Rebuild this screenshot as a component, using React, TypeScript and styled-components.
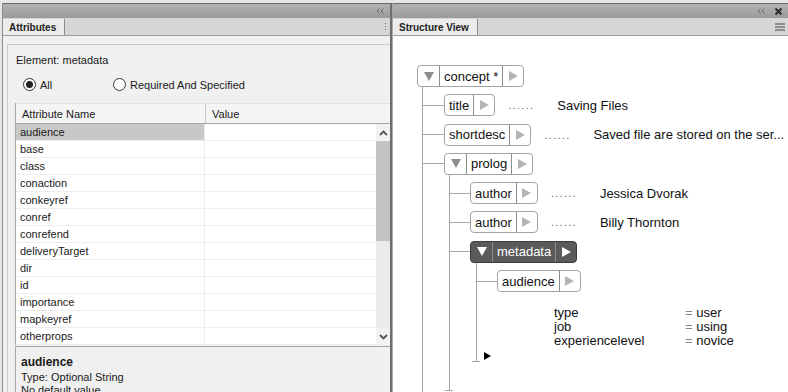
import React from 'react'
import styled, { createGlobalStyle } from 'styled-components'

const GlobalStyle = createGlobalStyle`
  html, body {
    margin: 0;
    padding: 0;
  }
  body {
    width: 788px;
    height: 392px;
    overflow: hidden;
    background: #e6e6e6;
    font-family: 'Liberation Sans', Arial, sans-serif;
  }
`

const attributes = [
  'audience', 'base', 'class', 'conaction', 'conkeyref', 'conref', 'conrefend',
  'deliveryTarget', 'dir', 'id', 'importance', 'mapkeyref', 'otherprops',
]

const Frame = styled.div`
  display: flex;
  width: 788px;
  height: 392px;
  padding-top: 3px;
  box-sizing: border-box;
  overflow: hidden;
`

const LeftPanel = styled.div`
  display: flex;
  flex-direction: column;
  width: 390px;
  margin-left: 2px;
  box-sizing: border-box;
  border-left: 1px solid #8c8c8c;
  border-right: 2px solid #6e6e6e;
  flex: none;
`

const RightPanel = styled.div`
  display: flex;
  flex-direction: column;
  flex: 1;
  border-left: 1px solid #a8a8a8;
`

const TitleBar = styled.div`
  display: flex;
  align-items: center;
  justify-content: flex-end;
  gap: 10px;
  height: 14px;
  padding-right: 6px;
  border-top: 1px solid #6a6a6a;
  background: linear-gradient(#b2b2b2, #9a9a9a);
  flex: none;
`

const TabStrip = styled.div`
  display: flex;
  align-items: stretch;
  justify-content: space-between;
  height: 17px;
  background: #d6d6d6;
  border-bottom: 1px solid #9c9c9c;
  flex: none;
`

const Tab = styled.div`
  display: flex;
  align-items: center;
  padding: 0 8px 0 6px;
  margin-top: 1px;
  background: #ececec;
  border-right: 1px solid #8a8a8a;
  font-size: 10px;
  font-weight: bold;
  color: #222;
`

const StripTools = styled.div`
  display: flex;
  align-items: center;
  padding-right: 3px;
`

const LeftBody = styled.div`
  flex: 1;
  display: flex;
  flex-direction: column;
  background: #f0f0f0;
  padding: 8px 0 0 4px;
  min-height: 0;
`

const GroupBox = styled.div`
  flex: 1;
  display: flex;
  flex-direction: column;
  border-top: 1px solid #c8c8c8;
  border-left: 1px solid #c8c8c8;
  padding: 8px 0 0 8px;
  font-size: 11px;
  color: #1a1a1a;
  min-height: 0;
`

const ElementLine = styled.div`
  line-height: 14px;
`

const RadioRow = styled.div`
  display: flex;
  align-items: center;
  margin-top: 11px;
  padding-left: 7px;
  height: 14px;
`

const RadioOption = styled.label<{ $width?: number }>`
  display: flex;
  align-items: center;
  gap: 4px;
  width: ${p => (p.$width ? `${p.$width}px` : 'auto')};
`

const Radio = styled.span<{ $on?: boolean }>`
  display: flex;
  align-items: center;
  justify-content: center;
  width: 13px;
  height: 13px;
  box-sizing: border-box;
  border-radius: 50%;
  border: 1px solid #333;
  background: #fff;
  &::after {
    content: '';
    width: 7px;
    height: 7px;
    border-radius: 50%;
    background: ${p => (p.$on ? '#222' : 'transparent')};
  }
`

const Table = styled.div`
  display: flex;
  flex-direction: column;
  margin: 12px 0 0 -1px;
  border-left: 1px solid #a8a8a8;
  background: #fff;
`

const HeaderRow = styled.div`
  display: flex;
  height: 19px;
  border-top: 1px solid #e0e0e0;
  border-bottom: 1px solid #a6a6a6;
  background: #f4f4f4;
`

const HeaderCell = styled.div<{ $width?: number }>`
  display: flex;
  align-items: center;
  padding-left: 6px;
  width: ${p => (p.$width ? `${p.$width}px` : 'auto')};
  flex: ${p => (p.$width ? 'none' : '1')};
  box-sizing: border-box;
  border-right: ${p => (p.$width ? '1px solid #c8c8c8' : 'none')};
`

const TableBody = styled.div`
  display: flex;
`

const Rows = styled.div`
  flex: 1;
  display: flex;
  flex-direction: column;
`

const Row = styled.div`
  display: flex;
  height: 17px;
  box-sizing: border-box;
  border-bottom: 1px solid #ededed;
`

const NameCell = styled.div<{ $selected?: boolean }>`
  display: flex;
  align-items: center;
  width: 189px;
  padding-left: 4px;
  box-sizing: border-box;
  border-right: 1px solid #ededed;
  background: ${p => (p.$selected ? '#c8c8c8' : 'transparent')};
`

const ValueCell = styled.div`
  flex: 1;
`

const Scrollbar = styled.div`
  display: flex;
  flex-direction: column;
  width: 14px;
  background: #ebebeb;
  flex: none;
`

const ScrollButton = styled.div`
  display: flex;
  align-items: center;
  justify-content: center;
  height: 17px;
  background: #f2f2f2;
`

const Thumb = styled.div`
  height: 100px;
  background: #c3c3c3;
`

const Track = styled.div`
  flex: 1;
`

const Description = styled.div`
  flex: 1;
  margin: 1px 0 0 -1px;
  border: 1px solid #a8a8a8;
  border-right: none;
  border-bottom: none;
  background: #f0f0f0;
  padding: 9px 5px 0;
  line-height: 13px;
`

const DescTitle = styled.div`
  font-size: 12px;
  font-weight: bold;
  margin-bottom: 2px;
`

const TreeBody = styled.div`
  flex: 1;
  background: #fff;
  padding: 29px 0 0 24px;
  overflow: hidden;
  font-size: 13px;
  color: #111;
`

const TreeRow = styled.div<{ $first?: boolean }>`
  display: flex;
  align-items: center;
  height: 22px;
  margin-top: ${p => (p.$first ? '0' : '7.3px')};
  white-space: nowrap;
`

const Connector = styled.span<{ $w: number }>`
  width: ${p => p.$w}px;
  height: 1px;
  background: #a6a6a6;
  flex: none;
`

const Children = styled.div<{ $indent: number; $tail?: number }>`
  display: flex;
  flex-direction: column;
  align-items: flex-start;
  margin-left: ${p => p.$indent}px;
  border-left: 1px solid #a6a6a6;
  padding-bottom: ${p => p.$tail ?? 0}px;
`

const Tick = styled.span<{ $gap: number }>`
  display: block;
  width: 8px;
  height: 1px;
  margin: ${p => p.$gap}px 0 0 -5px;
  background: #a6a6a6;
`

const NodeBox = styled.div<{ $dark?: boolean }>`
  display: inline-flex;
  height: 22px;
  box-sizing: border-box;
  border: 1px solid ${p => (p.$dark ? '#3c3c3c' : '#a3a3a3')};
  border-radius: 4px;
  background: ${p => (p.$dark ? '#5a5a5a' : '#fff')};
  color: ${p => (p.$dark ? '#fff' : '#111')};
  flex: none;
`

const Seg = styled.span<{ $dark?: boolean; $w?: number }>`
  display: flex;
  align-items: center;
  justify-content: center;
  width: ${p => (p.$w ? `${p.$w}px` : 'auto')};
  padding: ${p => (p.$w ? '0' : '0 4px')};
  & + & {
    border-left: 1px solid ${p => (p.$dark ? '#8c8c8c' : '#c6c6c6')};
  }
`

const DownTri = styled.span<{ $dark?: boolean }>`
  display: block;
  width: 0;
  height: 0;
  border-left: 5px solid transparent;
  border-right: 5px solid transparent;
  border-top: 9px solid ${p => (p.$dark ? '#fff' : '#8e8e8e')};
`

const RightTri = styled.span<{ $dark?: boolean; $color?: string; $size?: number }>`
  display: block;
  width: 0;
  height: 0;
  border-top: ${p => (p.$size ?? 10) / 2}px solid transparent;
  border-bottom: ${p => (p.$size ?? 10) / 2}px solid transparent;
  border-left: ${p => ((p.$size ?? 10) * 0.9).toFixed(1)}px solid
    ${p => p.$color ?? (p.$dark ? '#fff' : '#b4b4b4')};
`

const Dots = styled.span`
  width: 62px;
  padding-left: 13px;
  box-sizing: border-box;
  letter-spacing: 1.3px;
  color: #666;
  font-size: 11px;
  flex: none;
`

const Value = styled.span`
  color: #111;
`

const AttrBlock = styled.div`
  display: grid;
  grid-template-columns: 131px auto;
  margin: 14px 0 0 77px;
  line-height: 14px;
`

const AttrEq = styled.span`
  color: #111;
  &::before {
    content: '= ';
    color: #888;
  }
`

const EndMarker = styled.span`
  display: flex;
  margin: 4px 0 0 7px;
`

const Chevrons = () => (
  <svg width="8" height="6" viewBox="0 0 8 6">
    <polyline points="3.5,0.5 1,3 3.5,5.5" fill="none" stroke="#666" strokeWidth="1" />
    <polyline points="7.5,0.5 5,3 7.5,5.5" fill="none" stroke="#666" strokeWidth="1" />
  </svg>
)

const CloseIcon = () => (
  <svg width="7" height="7" viewBox="0 0 7 7">
    <path d="M0.5 0.5 L6.5 6.5 M6.5 0.5 L0.5 6.5" stroke="#2a2a2a" strokeWidth="2" />
  </svg>
)

const MenuIcon = () => (
  <svg width="10" height="8" viewBox="0 0 10 8">
    <path d="M0 1 H10 M0 4 H10 M0 7 H10" stroke="#444" strokeWidth="1.2" />
  </svg>
)

const Grip = () => (
  <svg width="2" height="8" viewBox="0 0 2 8">
    <rect x="0" y="0" width="1" height="1" fill="#666" />
    <rect x="0" y="3" width="1" height="1" fill="#666" />
    <rect x="0" y="6" width="1" height="1" fill="#666" />
  </svg>
)

const Chevron = ({ up }: { up?: boolean }) => (
  <svg width="9" height="6" viewBox="0 0 9 6">
    <polyline
      points={up ? '1,5 4.5,1.5 8,5' : '1,1 4.5,4.5 8,1'}
      fill="none"
      stroke="#555"
      strokeWidth="1.8"
    />
  </svg>
)

interface NodeProps {
  label: string
  toggle?: boolean
  dark?: boolean
}

const Node = ({ label, toggle, dark }: NodeProps) => (
  <NodeBox $dark={dark}>
    {toggle && (
      <Seg $dark={dark} $w={21}>
        <DownTri $dark={dark} />
      </Seg>
    )}
    <Seg $dark={dark}>{label}</Seg>
    <Seg $dark={dark} $w={20}>
      <RightTri $dark={dark} />
    </Seg>
  </NodeBox>
)

const Leaf = ({ label, value, w }: { label: string; value?: string; w: number }) => (
  <TreeRow>
    <Connector $w={w} />
    <Node label={label} />
    {value && (
      <>
        <Dots>......</Dots>
        <Value>{value}</Value>
      </>
    )}
  </TreeRow>
)

const AttributesPanel = () => (
  <LeftPanel>
    <TitleBar>
      <Chevrons />
    </TitleBar>
    <TabStrip>
      <Tab>Attributes</Tab>
      <StripTools>
        <Grip />
      </StripTools>
    </TabStrip>
    <LeftBody>
      <GroupBox>
        <ElementLine>Element: metadata</ElementLine>
        <RadioRow>
          <RadioOption $width={90}>
            <Radio $on />
            All
          </RadioOption>
          <RadioOption>
            <Radio />
            Required And Specified
          </RadioOption>
        </RadioRow>
        <Table>
          <HeaderRow>
            <HeaderCell $width={190}>Attribute Name</HeaderCell>
            <HeaderCell>Value</HeaderCell>
          </HeaderRow>
          <TableBody>
            <Rows>
              {attributes.map((name, i) => (
                <Row key={name}>
                  <NameCell $selected={i === 0}>{name}</NameCell>
                  <ValueCell />
                </Row>
              ))}
            </Rows>
            <Scrollbar>
              <ScrollButton>
                <Chevron up />
              </ScrollButton>
              <Thumb />
              <Track />
              <ScrollButton>
                <Chevron />
              </ScrollButton>
            </Scrollbar>
          </TableBody>
        </Table>
        <Description>
          <DescTitle>audience</DescTitle>
          <div>Type: Optional String</div>
          <div>No default value</div>
        </Description>
      </GroupBox>
    </LeftBody>
  </LeftPanel>
)

const StructurePanel = () => (
  <RightPanel>
    <TitleBar>
      <Chevrons />
      <CloseIcon />
    </TitleBar>
    <TabStrip>
      <Tab>Structure View</Tab>
      <StripTools>
        <MenuIcon />
      </StripTools>
    </TabStrip>
    <TreeBody>
      <TreeRow $first>
        <Node label="concept *" toggle />
      </TreeRow>
      <Children $indent={5} $tail={40}>
        <Leaf label="title" value="Saving Files" w={21} />
        <Leaf label="shortdesc" value="Saved file are stored on the ser..." w={21} />
        <TreeRow>
          <Connector $w={21} />
          <Node label="prolog" toggle />
        </TreeRow>
        <Children $indent={26}>
          <Leaf label="author" value="Jessica Dvorak" w={20} />
          <Leaf label="author" value="Billy Thornton" w={20} />
          <TreeRow>
            <Connector $w={20} />
            <Node label="metadata" toggle dark />
          </TreeRow>
          <Children $indent={26}>
            <Leaf label="audience" w={20} />
            <AttrBlock>
              <span>type</span>
              <AttrEq>user</AttrEq>
              <span>job</span>
              <AttrEq>using</AttrEq>
              <span>experiencelevel</span>
              <AttrEq>novice</AttrEq>
            </AttrBlock>
            <EndMarker>
              <RightTri $color="#000" $size={8} />
            </EndMarker>
            <Tick $gap={1} />
          </Children>
          <Tick $gap={28} />
        </Children>
      </Children>
    </TreeBody>
  </RightPanel>
)

export default function App() {
  return (
    <>
      <GlobalStyle />
      <Frame>
        <AttributesPanel />
        <StructurePanel />
      </Frame>
    </>
  )
}
